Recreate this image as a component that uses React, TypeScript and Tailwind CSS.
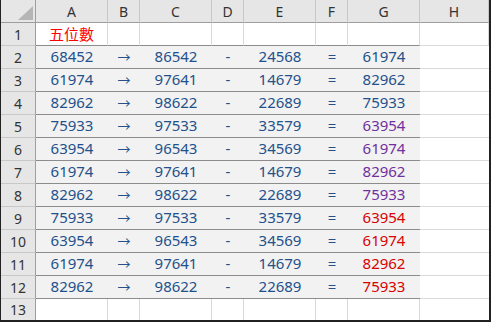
const cols = ["A", "B", "C", "D", "E", "F", "G", "H"];
const widths = ["w-[72px]", "w-[32px]", "w-[72px]", "w-[32px]", "w-[72px]", "w-[32px]", "w-[72px]", "flex-1"];

const blue = "text-[#23518c]";
const purple = "text-[#7030a0]";
const red = "text-[#d80000]";

const rows: { v: string[]; c: string }[] = [
  { v: ["68452", "→", "86542", "-", "24568", "=", "61974"], c: blue },
  { v: ["61974", "→", "97641", "-", "14679", "=", "82962"], c: blue },
  { v: ["82962", "→", "98622", "-", "22689", "=", "75933"], c: blue },
  { v: ["75933", "→", "97533", "-", "33579", "=", "63954"], c: purple },
  { v: ["63954", "→", "96543", "-", "34569", "=", "61974"], c: purple },
  { v: ["61974", "→", "97641", "-", "14679", "=", "82962"], c: purple },
  { v: ["82962", "→", "98622", "-", "22689", "=", "75933"], c: purple },
  { v: ["75933", "→", "97533", "-", "33579", "=", "63954"], c: red },
  { v: ["63954", "→", "96543", "-", "34569", "=", "61974"], c: red },
  { v: ["61974", "→", "97641", "-", "14679", "=", "82962"], c: red },
  { v: ["82962", "→", "98622", "-", "22689", "=", "75933"], c: red },
];

const RowHead = ({ n, last }: { n: number; last?: boolean }) => (
  <div
    className={`flex w-[35px] items-center justify-center border-r border-[#9e9e9e] bg-[#e6e6e6] text-[14px] text-[#333] ${
      last ? "h-[21px]" : "h-[23px] border-b border-b-[#c8c8c8]"
    }`}
  >
    {n}
  </div>
);

export default function App() {
  return (
    <div
      className="flex h-[322px] w-[491px] flex-col overflow-hidden border-b-2 border-l border-r-2 border-[#222] bg-white"
      style={{ fontFamily: '"Noto Sans", "Noto Sans CJK TC", sans-serif' }}
    >
      {/* column headers */}
      <div className="flex h-[23px]">
        <div className="relative w-[35px] border-b border-r border-[#9e9e9e] bg-[#e6e6e6]">
          <svg className="absolute bottom-[2px] right-[2px]" width="15" height="14" viewBox="0 0 15 14">
            <polygon points="15,0 15,14 0,14" fill="#b5b5b5" />
          </svg>
        </div>
        {cols.map((c, i) => (
          <div
            key={c}
            className={`${widths[i]} flex items-center justify-center border-b border-r border-b-[#9e9e9e] border-r-[#c8c8c8] bg-[#e6e6e6] text-[14px] text-[#333]`}
          >
            {c}
          </div>
        ))}
      </div>

      {/* row 1 */}
      <div className="flex">
        <RowHead n={1} />
        {cols.map((c, i) => (
          <div
            key={c}
            className={`${widths[i]} flex h-[23px] items-center justify-center border-b border-r border-r-[#d9d9d9] ${
              i < 7 ? "border-b-[#8c8c8c]" : "border-b-[#d9d9d9]"
            } text-[15px] text-[#ff0000]`}
          >
            {i === 0 ? "五位數" : ""}
          </div>
        ))}
      </div>

      {/* data rows */}
      {rows.map((r, ri) => (
        <div key={ri} className="flex">
          <RowHead n={ri + 2} />
          {r.v.map((v, i) => (
            <div
              key={i}
              className={`${widths[i]} flex h-[23px] items-center justify-center border-b border-b-[#8c8c8c] bg-[#f2f2f2] pb-[1px] ${
                i === 1 ? "font-['Noto_Sans_CJK_TC'] text-[13px]" : "text-[15px]"
              } ${i === 6 ? r.c : blue}`}
            >
              {v}
            </div>
          ))}
          <div className="h-[23px] flex-1 border-b border-[#d9d9d9]" />
        </div>
      ))}

      {/* row 13 */}
      <div className="flex">
        <RowHead n={13} last />
        {cols.map((c, i) => (
          <div key={c} className={`${widths[i]} h-[21px] ${i < 7 ? "border-r border-[#d9d9d9]" : ""}`} />
        ))}
      </div>
    </div>
  );
}
